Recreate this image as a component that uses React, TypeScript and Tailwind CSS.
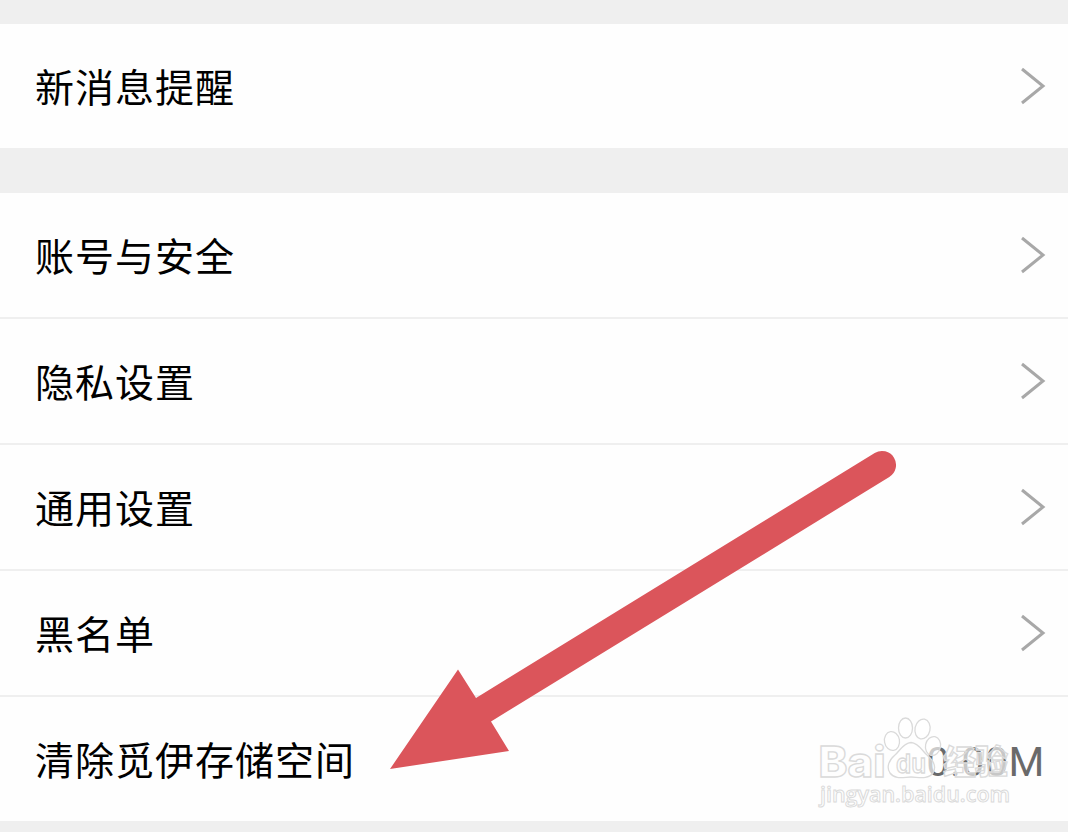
interface SettingItem {
  label: string;
  value?: string;
}

const GROUPS: SettingItem[][] = [
  [{ label: "新消息提醒" }],
  [
    { label: "账号与安全" },
    { label: "隐私设置" },
    { label: "通用设置" },
    { label: "黑名单" },
    { label: "清除觅伊存储空间", value: "0.00M" },
  ],
];

function Chevron() {
  return (
    <svg width="26" height="38" viewBox="0 0 26 38" fill="none" stroke="#a8a8a8" strokeWidth="3">
      <path d="M2 2 L23 19 L2 36" />
    </svg>
  );
}

function SettingRow({ item }: { item: SettingItem }) {
  return (
    <div className="flex h-[124px] items-center justify-between bg-[#fefefe] pl-[35px] pr-[23px]">
      <span className="pb-[1px] text-[39px] leading-none tracking-[1px] text-black">{item.label}</span>
      {item.value ? (
        <span className="pt-[7px] font-[Roboto,sans-serif] text-[41px] leading-none tracking-[0.6px] text-[#6a6a6a]">
          {item.value}
        </span>
      ) : (
        <div className="-mr-px">
          <Chevron />
        </div>
      )}
    </div>
  );
}

function Arrow() {
  return (
    <svg className="absolute left-[380px] top-[440px]" width="530" height="340" viewBox="380 440 530 340">
      <path
        d="M390 769 L458 669.5 L476 698 L874.7 453 A14 14 0 0 1 889.3 477 L491 721.5 L509 751 Z"
        fill="#db555b"
      />
    </svg>
  );
}

function Watermark() {
  return (
    <svg
      className="absolute left-[810px] top-[710px]"
      width="210"
      height="110"
      viewBox="810 710 210 110"
      fill="#ffffff"
      fillOpacity="0.65"
      stroke="#dadada"
      strokeWidth="1.3"
    >
      <text x="818.5" y="776.5" fontSize="42" fontFamily="Inter, sans-serif" fontWeight="800" textLength="67" lengthAdjust="spacingAndGlyphs">
        Bai
      </text>
      <text x="943" y="774" fontSize="33" fontFamily="Noto Sans CJK SC, sans-serif" fontWeight="900" textLength="65">
        经验
      </text>
      <ellipse cx="892" cy="741" rx="7.5" ry="9.5" transform="rotate(-10 892 741)" />
      <ellipse cx="905.5" cy="728" rx="7" ry="10" />
      <ellipse cx="922.5" cy="729" rx="7.5" ry="10" transform="rotate(12 922.5 729)" />
      <ellipse cx="933" cy="746" rx="7.5" ry="9.5" transform="rotate(12 933 746)" />
      <path d="M911 742.500 C903 743 900 751 895 755 C889 760 886 767 890 773 C895 780 904 777 911 777 C918 777 928 780 933 773 C937 766 933 760 927 755 C922 751 919 743 911 742.500 Z" />
      <text x="896" y="773" fontSize="26" fontFamily="Inter, sans-serif" fontWeight="600" textLength="30" lengthAdjust="spacingAndGlyphs">
        du
      </text>
      <text x="820" y="802" fontSize="22" fontFamily="Open Sans, sans-serif" fontWeight="600" strokeWidth="1" textLength="190" lengthAdjust="spacingAndGlyphs">
        jingyan.baidu.com
      </text>
    </svg>
  );
}

export default function App() {
  return (
    <div className="relative h-[832px] w-[1068px] overflow-hidden bg-[#efefef] pt-6 font-['Noto_Sans_CJK_SC',sans-serif]">
      <div className="flex flex-col gap-[45px]">
        {GROUPS.map((group) => (
          <section key={group[0].label} className="flex flex-col gap-[2px]">
            {group.map((item) => (
              <SettingRow key={item.label} item={item} />
            ))}
          </section>
        ))}
      </div>
      <Arrow />
      <Watermark />
    </div>
  );
}
